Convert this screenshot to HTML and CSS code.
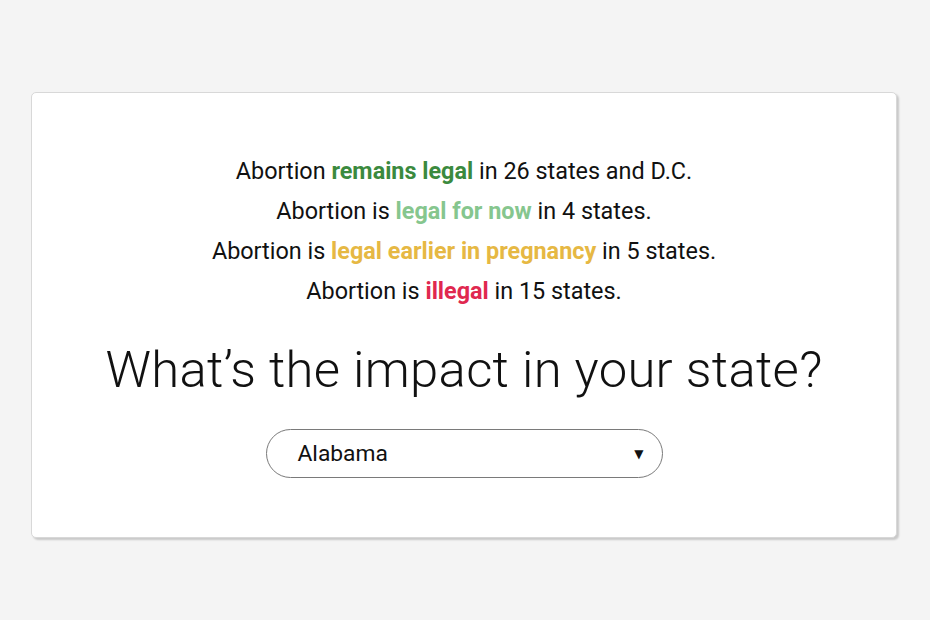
FILE: index.html
```html
<!DOCTYPE html>
<html lang="en">
<head>
<meta charset="utf-8">
<title>Abortion access by state</title>
<link rel="stylesheet" href="styles.css">
</head>
<body>
<main class="page">
  <section class="card">
    <div class="summary">
      <p class="line">Abortion <strong class="s-legal">remains legal</strong> in 26 states and D.C.</p>
      <p class="line">Abortion is <strong class="s-now">legal for now</strong> in 4 states.</p>
      <p class="line">Abortion is <strong class="s-early">legal earlier in pregnancy</strong> in 5 states.</p>
      <p class="line">Abortion is <strong class="s-illegal">illegal</strong> in 15 states.</p>
    </div>
    <h1 class="title">What’s the impact in your state?</h1>
    <div class="select">
      <span class="select-value">Alabama</span>
      <span class="select-arrow">▼</span>
    </div>
  </section>
</main>
</body>
</html>
```
FILE: styles.css
```css
html, body {
  margin: 0;
  padding: 0;
}
body {
  background: #f4f4f4;
  font-family: Roboto, "Noto Sans", "DejaVu Sans", sans-serif;
  color: #111;
  width: 930px;
  height: 620px;
  overflow: hidden;
}
.page {
  padding: 92px 33px 0 31px;
}
.card {
  box-sizing: border-box;
  width: 866px;
  height: 446px;
  background: #fff;
  border: 1px solid #d8d8d8;
  border-radius: 5px;
  box-shadow: 2px 2px 2px rgba(0,0,0,0.18);
  display: flex;
  flex-direction: column;
  align-items: center;
  padding-top: 58px;
}
.summary {
  display: flex;
  flex-direction: column;
  align-items: center;
}
.line {
  margin: 0;
  font-size: 23.4px;
  line-height: 40px;
  font-weight: 400;
}
.line strong {
  font-weight: 700;
}
.s-legal { color: #3b8a3e; }
.s-now { color: #86c68e; }
.s-early { color: #e6b843; }
.s-illegal { color: #e0284f; }
.title {
  margin: 29px 0 0;
  font-size: 50.8px;
  line-height: 60px;
  font-weight: 300;
  letter-spacing: 0.3px;
}
.select {
  box-sizing: border-box;
  margin-top: 29px;
  width: 397px;
  height: 49px;
  border: 1px solid #7a7a7a;
  border-radius: 25px;
  display: flex;
  align-items: center;
  justify-content: space-between;
  padding: 0 18px 0 31px;
}
.select-value {
  font-size: 22.8px;
}
.select-arrow {
  font-size: 12px;
}
```
